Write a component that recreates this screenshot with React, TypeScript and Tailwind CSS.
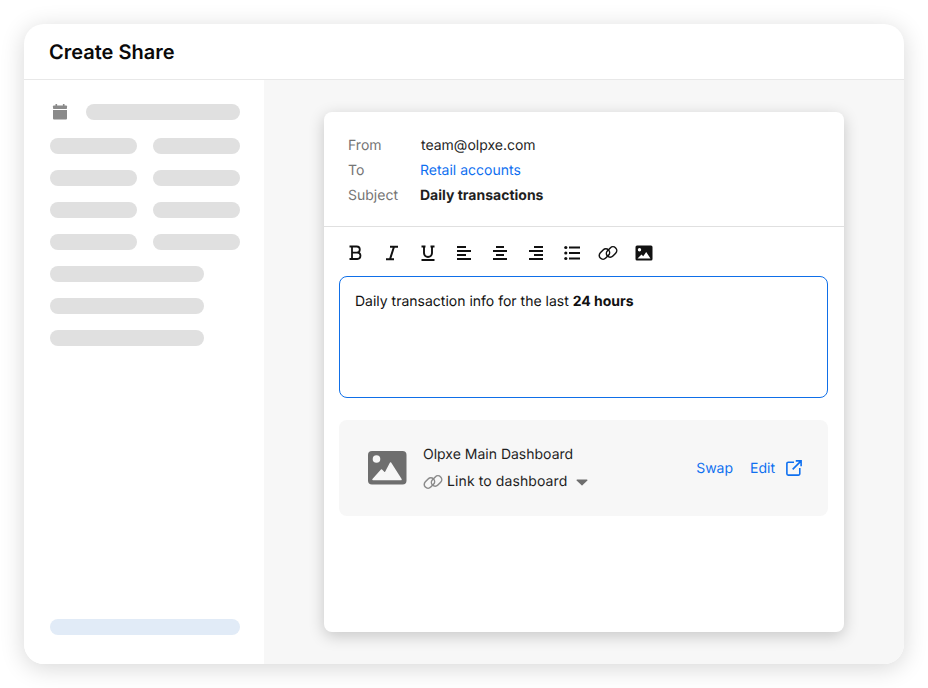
import type { ReactNode } from 'react';

function ToolIcon({ children }: { children: ReactNode }) {
  return (
    <div className="w-[36px] h-[20px] flex items-center justify-center">
      <svg width="20" height="20" viewBox="0 0 20 20" fill="none">
        {children}
      </svg>
    </div>
  );
}

function Bar({ className }: { className: string }) {
  return <div className={`h-4 rounded-full bg-[#e0e0e0] ${className}`} />;
}

function LinkIcon({ color, size }: { color: string; size: number }) {
  return (
    <svg width={size} height={size} viewBox="0 0 20 20" fill="none">
      <g transform="rotate(-45 10 10)" stroke={color} strokeWidth="1.500">
        <rect x="1" y="4.400" width="11.500" height="7.600" rx="3.800" />
        <rect x="7.500" y="8" width="11.500" height="7.600" rx="3.800" />
      </g>
    </svg>
  );
}

function Sidebar() {
  return (
    <aside className="w-[240px] shrink-0 bg-white flex flex-col pl-[26px] pr-6 pt-6 pb-[29px]">
      <div className="flex items-center gap-[18px]">
        <svg className="ml-[2px]" width="16" height="16" viewBox="0 0 16 16" fill="#8a8a8a">
          <rect x="3.500" y="0" width="1.600" height="3" />
          <rect x="10.900" y="0" width="1.600" height="3" />
          <rect x="1" y="1.500" width="14" height="3.500" rx="0.800" />
          <path d="M1 6h14v8.600a1 1 0 0 1-1 1H2a1 1 0 0 1-1-1z" />
        </svg>
        <Bar className="w-[154px]" />
      </div>
      <div className="mt-[18px] grid grid-cols-2 gap-x-4 gap-y-4 w-[190px]">
        <Bar className="" />
        <Bar className="" />
        <Bar className="" />
        <Bar className="" />
        <Bar className="" />
        <Bar className="" />
        <Bar className="" />
        <Bar className="" />
      </div>
      <div className="mt-4 flex flex-col gap-4">
        <Bar className="w-[154px]" />
        <Bar className="w-[154px]" />
        <Bar className="w-[154px]" />
      </div>
      <div className="mt-auto h-4 w-[190px] rounded-full bg-[#e1ebf7]" />
    </aside>
  );
}

function MetaRows() {
  return (
    <div className="h-[115px] border-b border-[#e0e0e0] pl-6 pt-[21px] text-[14px] leading-[25px]">
      <div className="flex">
        <span className="w-[73px] text-[#757575]">From</span>
        <span className="text-[#1f1f1f]">team@olpxe.com</span>
      </div>
      <div className="flex">
        <span className="w-[72px] text-[#757575]">To</span>
        <span className="text-[#0f70f0]">Retail accounts</span>
      </div>
      <div className="flex">
        <span className="w-[72px] text-[#757575]">Subject</span>
        <span className="font-bold text-[#1f1f1f]">Daily transactions</span>
      </div>
    </div>
  );
}

function Toolbar() {
  const c = '#111111';
  return (
    <div className="flex pl-[14px] pt-4 pb-[13px]">
      <ToolIcon>
        <path
          d="M3.500 3.500h7.200a3 3 0 0 1 0 6.200H6M6 9.700h5.300a3.100 3.100 0 0 1 0 6.300H3.500M6 3.500V16"
          stroke={c}
          strokeWidth="1.800"
        />
      </ToolIcon>
      <ToolIcon>
        <path d="M8 3.800h8M4 16.200h8M12 3.800 8 16.200" stroke={c} strokeWidth="2" />
      </ToolIcon>
      <ToolIcon>
        <path
          d="M6 3.500v6.500a4 4 0 0 0 8 0V3.500M3.500 3.500h4M12.500 3.500h4M3.500 17h13"
          stroke={c}
          strokeWidth="1.900"
        />
      </ToolIcon>
      <ToolIcon>
        <path d="M3 4h9M3 8h14M3 12h9M3 16h14" stroke={c} strokeWidth="1.800" />
      </ToolIcon>
      <ToolIcon>
        <path d="M6 4h8M3 8h14M6 12h8M3 16h14" stroke={c} strokeWidth="1.800" />
      </ToolIcon>
      <ToolIcon>
        <path d="M8 4h9M3 8h14M8 12h9M3 16h14" stroke={c} strokeWidth="1.800" />
      </ToolIcon>
      <ToolIcon>
        <circle cx="3.800" cy="4.500" r="1.600" fill={c} />
        <circle cx="3.800" cy="10" r="1.600" fill={c} />
        <circle cx="3.800" cy="15.500" r="1.600" fill={c} />
        <path d="M7 4.500h11M7 10h11M7 15.500h11" stroke={c} strokeWidth="1.800" />
      </ToolIcon>
      <div className="w-[36px] h-[20px] flex items-center justify-center">
        <LinkIcon color={c} size={20} />
      </div>
      <ToolIcon>
        <path
          fillRule="evenodd"
          clipRule="evenodd"
          d="M3 2.500h14A1.500 1.500 0 0 1 18.500 4v12a1.500 1.500 0 0 1-1.500 1.500H3A1.500 1.500 0 0 1 1.500 16V4A1.500 1.500 0 0 1 3 2.500zM5.500 5a1.700 1.700 0 1 0 0 3.400 1.700 1.700 0 0 0 0-3.400zM3.500 15.500h13l-4.300-6.500-3 4.300-1.700-1.800z"
          fill={c}
        />
      </ToolIcon>
    </div>
  );
}

function Attachment() {
  return (
    <div className="mt-[22px] ml-[15px] mr-4 h-[96px] rounded-lg bg-[#f7f7f7] flex items-center pl-7 pr-[26px]">
      <svg width="40" height="36" viewBox="0 0 40 36" fill="none">
        <rect x="1" y="1" width="38.500" height="33.500" rx="4" fill="#6e6e6e" />
        <circle cx="9.500" cy="9" r="3.800" fill="#f7f7f7" />
        <path
          d="M6 29.500 14.500 20 18 23.500 23.500 13 34 29.500z"
          fill="#f7f7f7"
          stroke="#f7f7f7"
          strokeWidth="1.500"
          strokeLinejoin="round"
        />
      </svg>
      <div className="ml-4 flex flex-col text-[14px] leading-5 text-[#1f1f1f]">
        <span>Olpxe Main Dashboard</span>
        <div className="mt-[7px] flex items-center">
          <LinkIcon color="#8a8a8a" size={20} />
          <span className="ml-[4px] tracking-[0.1px]">Link to dashboard</span>
          <svg className="ml-[9px] mt-[2px]" width="12" height="7" viewBox="0 0 12 7" fill="#6e6e6e">
            <path d="M1 0.500h10a.6.6 0 0 1 .4 1L6.400 6.300a.6.6 0 0 1-.8 0L.6 1.500a.6.6 0 0 1 .4-1z" />
          </svg>
        </div>
      </div>
      <div className="ml-auto flex items-center text-[14px] text-[#0f70f0]">
        <span>Swap</span>
        <span className="ml-[17px]">Edit</span>
        <svg className="ml-[11px]" width="16" height="16" viewBox="0 0 18 18" fill="none" stroke="#0f70f0" strokeWidth="1.800">
          <path d="M9 2.500H2.500a1.500 1.500 0 0 0-1.500 1.500v11.500a1.500 1.500 0 0 0 1.500 1.500H14a1.500 1.500 0 0 0 1.500-1.500V9" />
          <path d="M11 1h6v6M17 1 7.500 10.500" />
        </svg>
      </div>
    </div>
  );
}

function EmailCard() {
  return (
    <div className="w-[520px] h-[520px] rounded-lg bg-white shadow-[0_4px_16px_rgba(0,0,0,0.2)]">
      <MetaRows />
      <Toolbar />
      <div className="ml-[15px] mr-4 h-[122px] rounded-lg border border-[#0f6fe8] px-[15px] pt-[15px] text-[14px] leading-5 text-[#111111]">
        Daily transaction info for the last <span className="font-bold">24 hours</span>
      </div>
      <Attachment />
    </div>
  );
}

export default function App() {
  return (
    <div className="w-[928px] h-[688px] bg-white p-6 font-['Inter',sans-serif] [text-rendering:geometricPrecision] antialiased">
      <div className="h-[640px] rounded-[20px] bg-white overflow-hidden shadow-[0_4px_24px_rgba(0,0,0,0.16)] flex flex-col">
        <header className="h-14 shrink-0 border-b border-[#e8e8e8] pl-[25px] flex items-center">
          <h1 className="text-[20px] font-semibold text-[#0a0a0a]">Create Share</h1>
        </header>
        <div className="flex-1 flex min-h-0">
          <Sidebar />
          <main className="flex-1 bg-[#f7f7f7] pt-8 pl-[60px]">
            <EmailCard />
          </main>
        </div>
      </div>
    </div>
  );
}
